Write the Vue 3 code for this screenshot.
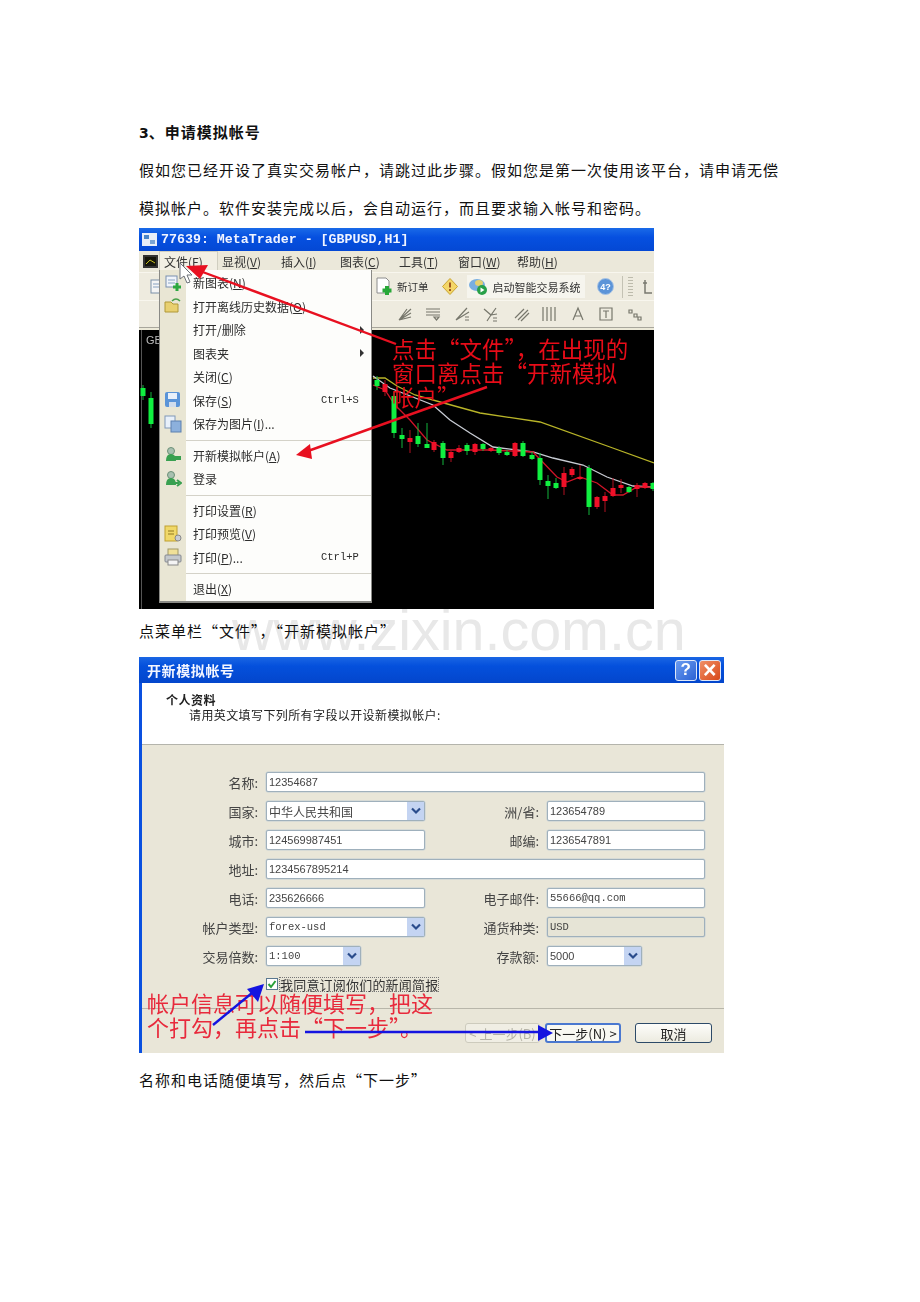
<template>
  <div class="page">
    <h3 class="heading"><span class="num">3</span>、申请模拟帐号</h3>
    <p class="para">假如您已经开设了真实交易帐户，请跳过此步骤。假如您是第一次使用该平台，请申请无偿</p>
    <p class="para">模拟帐户。软件安装完成以后，会自动运行，而且要求输入帐号和密码。</p>

    <!-- first screenshot: MetaTrader with file menu open -->
    <div class="mt">
      <div class="mt-title">
        <svg class="mt-logo" width="15" height="15" viewBox="0 0 15 15">
          <rect x="0" y="1" width="15" height="13" fill="#e8eef8" />
          <rect x="2" y="3" width="5" height="4" fill="#4a86c8" />
          <rect x="8" y="8" width="5" height="4" fill="#7aa4d4" />
        </svg>
        <span>77639: MetaTrader - [GBPUSD,H1]</span>
      </div>
      <div class="mt-menubar">
        <svg class="mt-doc" width="15" height="13" viewBox="0 0 15 13">
          <rect width="15" height="13" fill="#333" />
          <rect x="2" y="2" width="11" height="9" fill="#14140a" />
          <path d="M3 9 L7 5 L12 8" stroke="#c8c020" fill="none" />
        </svg>
        <span
          v-for="m in menubar"
          :key="m.t"
          class="mt-menu-name"
          :class="{ open: m.open }"
        >{{ m.t }}(<u>{{ m.k }}</u>)</span>
      </div>
      <div class="mt-tools first">
        <svg class="t-left" width="16" height="16" viewBox="0 0 16 16">
          <rect x="1" y="1" width="12" height="13" fill="#f4f4f4" stroke="#7a90a8" />
          <path d="M3 5h8M3 8h8" stroke="#86a0c0" />
        </svg>
        <svg class="t-order" width="17" height="19" viewBox="0 0 17 19">
          <path d="M1 1h9l3 3v12H1z" fill="#fff" stroke="#8c8c8c" />
          <path d="M11 9v9M6.500 13.500h9" stroke="#28a838" stroke-width="4" />
        </svg>
        <span class="t-text">新订单</span>
        <svg class="t-diamond" width="16" height="17" viewBox="0 0 16 17">
          <path d="M8 0.500 L15.500 8.500 L8 16.500 L0.500 8.500Z" fill="#f4d668" stroke="#c8a430" />
          <rect x="7" y="4.500" width="2" height="5" fill="#a05820" />
          <rect x="7" y="11" width="2" height="2" fill="#a05820" />
        </svg>
        <span class="t-expert">
          <svg width="19" height="18" viewBox="0 0 19 18">
            <ellipse cx="8" cy="7" rx="8" ry="6" fill="#78aee0" />
            <ellipse cx="10" cy="5" rx="4" ry="3" fill="#e4d070" />
            <circle cx="13" cy="12" r="5" fill="#28a048" />
            <path d="M11.500 9.500 L15.500 12 L11.500 14.500Z" fill="#fff" />
          </svg>
          <span>启动智能交易系统</span>
        </span>
        <svg class="t-help" width="17" height="17" viewBox="0 0 17 17">
          <circle cx="8.500" cy="8.500" r="8" fill="#5c94d8" stroke="#a8c4e4" />
          <text x="8.500" y="12" text-anchor="middle" font-size="9" font-weight="700" fill="#fff" font-family="Liberation Sans">4?</text>
        </svg>
        <span class="t-sep t-sep-a"></span>
        <span class="t-grip"></span>
        <svg class="t-one" width="12" height="16" viewBox="0 0 12 16">
          <path d="M4 1v13h7M2 4h4" stroke="#7a7a70" stroke-width="1.500" fill="none" />
        </svg>
      </div>
      <div class="mt-tools second">
        <svg v-for="(t, i) in drawTools" :key="i" class="t-draw" :style="{ marginLeft: t.gap + 'px' }" width="16" height="16" viewBox="0 0 16 16">
          <path :d="t.d" stroke="#77776c" stroke-width="1.200" fill="none" />
        </svg>
      </div>

      <div class="mt-chart">
        <svg width="515" height="279" viewBox="139 330 515 279">
          <rect x="141" y="330" width="1" height="279" fill="#555" />
          <text x="146" y="344" font-size="11" fill="#bbb" font-family="Liberation Sans">GB</text>
          <polyline :points="yellowLine" fill="none" stroke="#b8b428" stroke-width="1.300" />
          <polyline :points="whiteLine" fill="none" stroke="#c8ccd4" stroke-width="1.300" />
          <polyline :points="redLine" fill="none" stroke="#d01428" stroke-width="1.300" />
          <g v-for="(c, i) in candles" :key="i">
            <line :x1="c[0]" :x2="c[0]" :y1="c[3]" :y2="c[4]" :stroke="c[5] ? '#12b43c' : '#b01020'" stroke-width="1" />
            <rect :x="c[0] - 2.500" :y="c[1]" width="5" :height="c[2] - c[1]" :fill="c[5] ? '#10f040' : '#f01028'" />
          </g>
        </svg>
      </div>

      <div class="mt-file">
        <template v-for="(g, gi) in menuGroups" :key="gi">
          <div v-if="gi" class="file-sep"></div>
          <div v-for="it in g" :key="it.t" class="file-item">
            <span class="file-icon">
              <svg v-if="it.icon" width="18" height="18" viewBox="0 0 18 18" v-html="icons[it.icon]"></svg>
            </span>
            <span class="file-label">{{ it.t }}<template v-if="it.k">(<u>{{ it.k }}</u>)</template>{{ it.dots }}</span>
            <span v-if="it.sc" class="file-sc">{{ it.sc }}</span>
            <span v-if="it.sub" class="file-sub"></span>
          </div>
        </template>
      </div>

      <svg class="overlay" width="515" height="381" viewBox="139 228 515 381">
        <g class="note-red">
          <text x="392" y="358">点击“文件”，在出现的</text>
          <text x="392" y="382">窗口离点击“开新模拟</text>
          <text x="392" y="406">帐户”</text>
        </g>
        <line x1="396" y1="344" x2="200" y2="271" stroke="#e81020" stroke-width="2.400" />
        <path d="M186 266 L208 265 L200 279Z" fill="#e81020" />
        <line x1="487" y1="387" x2="308" y2="451" stroke="#e81020" stroke-width="2.400" />
        <path d="M296 455 L310 444 L312 459Z" fill="#e81020" />
        <path d="M180 263 L180 279 L184 276 L187 283 L190 282 L187 275 L192 275Z" fill="#fff" stroke="#6c7078" />
      </svg>
    </div>

    <div class="caption-row">
      <span class="watermark">www.zixin.com.cn</span>
      <p class="caption">点菜单栏“文件”，“开新模拟帐户”</p>
    </div>

    <!-- second screenshot: new demo account dialog -->
    <div class="dlg">
      <div class="dlg-title">
        <span>开新模拟帐号</span>
        <div class="dlg-btns">
          <span class="cap help">?</span>
          <span class="cap close">×</span>
        </div>
      </div>
      <div class="dlg-inner">
        <div class="dlg-head">
          <div class="head-main">个人资料</div>
          <div class="head-sub">请用英文填写下列所有字段以开设新模拟帐户:</div>
        </div>
        <div class="dlg-body">
          <div class="form">
            <template v-for="f in fields" :key="f.label">
              <label class="f-label">{{ f.label }}:</label>
              <div
                class="f-box"
                :class="[f.cls, { sel: f.sel, off: f.off }]"
              >
                <span :class="f.font">{{ f.val }}</span>
                <span v-if="f.sel" class="f-arrow">
                  <svg width="12" height="8" viewBox="0 0 12 8"><path d="M2 1.500 L6 5.500 L10 1.500" stroke="#2a4c8c" stroke-width="2.200" fill="none" /></svg>
                </span>
              </div>
            </template>
          </div>
          <div class="agree">
            <span class="check">
              <svg width="10" height="10" viewBox="0 0 10 10"><path d="M1.500 5 L4 8 L8.500 2" stroke="#28a038" stroke-width="2" fill="none" /></svg>
            </span>
            <span class="agree-text">我同意订阅你们的新闻简报</span>
          </div>
          <div class="dlg-sep"></div>
          <div class="dlg-foot">
            <span class="btn disabled">&lt; 上一步(B)</span>
            <span class="btn primary">下一步(N) &gt;</span>
            <span class="btn cancel">取消</span>
          </div>
        </div>
      </div>
      <svg class="overlay" width="585" height="396" viewBox="139 657 585 396">
        <g class="note-pink">
          <text x="147" y="1012">帐户信息可以随便填写，把这</text>
          <text x="147" y="1036">个打勾，再点击“下一步”。</text>
        </g>
        <line x1="213" y1="1025" x2="252" y2="993" stroke="#1414e0" stroke-width="2.400" />
        <path d="M264 984 L258 1002 L247 989Z" fill="#1414e0" />
        <line x1="305" y1="1032" x2="542" y2="1032" stroke="#1414e0" stroke-width="2.400" />
        <path d="M553 1033 L538 1025 L538 1041Z" fill="#1414e0" />
      </svg>
    </div>

    <p class="caption last">名称和电话随便填写，然后点“下一步”</p>
  </div>
</template>

<script setup>
const menubar = [
  { t: '文件', k: 'F', open: true },
  { t: '显视', k: 'V' },
  { t: '插入', k: 'I' },
  { t: '图表', k: 'C' },
  { t: '工具', k: 'T' },
  { t: '窗口', k: 'W' },
  { t: '帮助', k: 'H' }
]

const drawTools = [
  { gap: 0, d: 'M2 14 L14 3 M2 14 L14 7 M2 14 L14 11 M2 14 L10 3' },
  { gap: 12, d: 'M1 3h14M1 6h14M1 9h14M9 11h5l-2.500 3z' },
  { gap: 13, d: 'M2 14 L13 2 M2 14 L15 6 M11 11h4M11 14h4' },
  { gap: 12, d: 'M2 3 L9 9 L14 2 M9 9 L5 15 M9 9 L15 8 M11 12h4M11 15h4' },
  { gap: 16, d: 'M1 12 L10 3 M4 14 L14 4 M7 15 L15 7' },
  { gap: 11, d: 'M2 1v14M6 1v14M10 1v14M14 1v14' },
  { gap: 13, d: 'M3 14 L8 2 L13 14 M5 10h6' },
  { gap: 12, d: 'M2 2h12v12H2z M5 5h6M8 5v7' },
  { gap: 13, d: 'M2 4h3v3H2z M7 8h3v3H7z M11 11h3v3h-3z' }
]

const yellowLine = '373,378 385,378 397,386 415,395 433,400 480,413 540,422 610,447 654,463'
const whiteLine = '373,376 390,388 433,405 450,420 470,433 493,447 533,452 553,458 583,465 607,477 633,486 654,487'
const redLine = '373,385 385,390 395,405 410,420 427,440 447,450 490,450 533,452 557,477 567,482 580,477 597,483 613,495 623,495 637,487 654,487'

// x, body top, body bottom, wick top, wick bottom, green
const candles = [
  [151, 398, 424, 392, 428, 1], [143, 388, 396, 385, 400, 1],
  [377, 380, 386, 376, 390, 1], [385, 384, 392, 380, 396, 0],
  [394, 396, 433, 392, 438, 1], [402, 435, 439, 428, 448, 1], [410, 438, 442, 430, 453, 0],
  [418, 436, 444, 423, 447, 1], [427, 444, 448, 423, 448, 1], [434, 442, 450, 440, 452, 0],
  [443, 443, 458, 441, 465, 1], [451, 452, 458, 450, 462, 0], [459, 448, 452, 445, 453, 0],
  [467, 445, 451, 443, 455, 1], [475, 444, 452, 443, 455, 0], [483, 444, 449, 443, 451, 1],
  [491, 448, 451, 447, 452, 0], [499, 448, 453, 446, 455, 1], [507, 452, 455, 450, 456, 1],
  [515, 443, 456, 442, 457, 0], [523, 443, 456, 441, 457, 1], [532, 455, 459, 452, 460, 1],
  [540, 458, 480, 453, 485, 1], [548, 481, 486, 475, 499, 1], [556, 483, 488, 478, 489, 1],
  [564, 473, 487, 467, 495, 0], [572, 469, 475, 467, 477, 0], [580, 477, 479, 465, 480, 0],
  [589, 468, 507, 465, 515, 1], [597, 497, 507, 496, 509, 0], [605, 496, 501, 492, 512, 0],
  [613, 488, 496, 478, 497, 0], [621, 485, 488, 479, 493, 0], [629, 487, 492, 486, 493, 1],
  [637, 485, 489, 483, 497, 0], [645, 483, 488, 482, 489, 0], [653, 483, 489, 482, 491, 1]
]

const menuGroups = [
  [
    { t: '新图表', k: 'N', icon: 'chart' },
    { t: '打开离线历史数据', k: 'O', icon: 'folder' },
    { t: '打开/删除', sub: true },
    { t: '图表夹', sub: true },
    { t: '关闭', k: 'C' },
    { t: '保存', k: 'S', sc: 'Ctrl+S', icon: 'disk' },
    { t: '保存为图片', k: 'I', dots: '...', icon: 'pic' }
  ],
  [
    { t: '开新模拟帐户', k: 'A', icon: 'user' },
    { t: '登录', icon: 'login' }
  ],
  [
    { t: '打印设置', k: 'R' },
    { t: '打印预览', k: 'V', icon: 'preview' },
    { t: '打印', k: 'P', dots: '...', sc: 'Ctrl+P', icon: 'printer' }
  ],
  [{ t: '退出', k: 'X' }]
]

const person = '<circle cx="7" cy="5" r="3.500" fill="#a8c0b0" stroke="#6c9078"/><path d="M2 15 Q2 8 7 8 Q12 8 12 15Z" fill="#38a050"/>'
const icons = {
  chart: '<rect x="2" y="2" width="11" height="11" fill="#f0f4fa" stroke="#7a90b0"/><path d="M4 6h7M4 9h7" stroke="#8aa4c4"/><path d="M13 9v8M9 13h8" stroke="#2ca840" stroke-width="3"/>',
  folder: '<path d="M1 15V5h6l2 2h5v8z" fill="#e8d070" stroke="#b09838"/><path d="M8 4 Q12 0 16 4" stroke="#48a048" stroke-width="1.500" fill="none"/>',
  disk: '<rect x="1" y="1" width="15" height="15" rx="2" fill="#5a94d8"/><rect x="4" y="2" width="9" height="6" fill="#e8f0fa"/><rect x="5" y="11" width="7" height="5" fill="#d0dcec"/>',
  pic: '<rect x="1" y="1" width="10" height="12" fill="#e8f0fa" stroke="#8098b8"/><rect x="7" y="6" width="10" height="11" fill="#8cb0dc" stroke="#5c80b0"/>',
  user: person + '<path d="M11 12h6" stroke="#38a050" stroke-width="4"/>',
  login: person + '<path d="M10 13h5M13 10l4 3-4 3" stroke="#38a050" stroke-width="2" fill="none"/>',
  preview: '<rect x="1" y="1" width="12" height="15" fill="#f0d868" stroke="#c0a030"/><path d="M4 6h6M4 9h6" stroke="#907820"/><circle cx="14" cy="13" r="3" fill="#c8ccd4" stroke="#888"/>',
  printer: '<rect x="4" y="1" width="10" height="7" fill="#f0e098" stroke="#a09868"/><rect x="1" y="7" width="16" height="7" rx="1" fill="#c4c8cc" stroke="#848890"/><rect x="4" y="12" width="10" height="5" fill="#f4f4f4" stroke="#888"/>'
}

const fields = [
  { label: '名称', val: '12354687', cls: 'wide' },
  { label: '国家', val: '中华人民共和国', sel: true, font: 'cjk-val' },
  { label: '洲/省', val: '123654789' },
  { label: '城市', val: '124569987451' },
  { label: '邮编', val: '1236547891' },
  { label: '地址', val: '1234567895214', cls: 'wide' },
  { label: '电话', val: '235626666' },
  { label: '电子邮件', val: '55666@qq.com', font: 'mono-val' },
  { label: '帐户类型', val: 'forex-usd', sel: true, font: 'mono-val' },
  { label: '通货种类', val: 'USD', off: true, font: 'mono-val' },
  { label: '交易倍数', val: '1:100', sel: true, cls: 'short', font: 'mono-val' },
  { label: '存款额', val: '5000', sel: true, cls: 'short' }
]
</script>

<style scoped>
.page {
  box-sizing: border-box;
  min-height: 1302px;
  padding: 122px 0 0 139px;
  font-family: "Noto Sans CJK SC", sans-serif;
  color: #111;
}

.heading {
  margin: 0;
  height: 19px;
  font-size: 15px;
  line-height: 19px;
  font-weight: 700;
  letter-spacing: 1px;
}

.num {
  font-family: "DejaVu Sans", sans-serif;
  font-size: 14px;
  letter-spacing: 0;
}

.para {
  margin: 0;
  height: 38px;
  font-size: 15px;
  line-height: 38px;
  letter-spacing: 1px;
  white-space: nowrap;
}

.heading + .para {
  margin-top: 10px;
}

.para + .mt {
  margin-top: 1px;
}

/* MetaTrader window */
.mt {
  position: relative;
  width: 515px;
  height: 381px;
  display: flex;
  flex-direction: column;
  overflow: hidden;
  background: #ece9d8;
  filter: blur(0.45px);
  z-index: 1;
}

.mt-title {
  height: 23px;
  flex: none;
  display: flex;
  align-items: center;
  gap: 4px;
  padding-left: 3px;
  background: linear-gradient(#1a6ae8, #0650e0 40%, #0448d4);
  color: #f0f4ff;
  font-family: "Liberation Mono", monospace;
  font-weight: 700;
  font-size: 13.300px;
  white-space: nowrap;
}

.mt-logo {
  flex: none;
}

.mt-menubar {
  height: 21px;
  flex: none;
  display: flex;
  align-items: center;
  padding-left: 4px;
  background: #ebe8da;
  font-size: 12px;
  color: #333;
}

.mt-doc {
  margin-right: 1px;
  flex: none;
}

.mt-menu-name {
  width: 59px;
  box-sizing: border-box;
  padding-left: 4px;
  white-space: nowrap;
}

.mt-menu-name.open {
  padding-left: 5px;
  height: 21px;
  line-height: 21px;
  background: #f2efe4;
  box-shadow: inset 1px 0 #d0cec0, inset -1px 0 #d0cec0, inset 0 1px #d0cec0;
}

.mt-tools {
  height: 28px;
  flex: none;
  display: flex;
  align-items: center;
  background: #eeebdf;
  border-top: 1px solid #f8f6ee;
  box-sizing: border-box;
}

.t-left {
  margin-left: 11px;
  flex: none;
}

.t-order {
  margin-left: 210px;
  flex: none;
}

.t-text {
  margin-left: 4px;
  font-size: 10.500px;
  color: #333;
  white-space: nowrap;
}

.t-diamond {
  margin-left: 13px;
  flex: none;
}

.t-expert {
  margin-left: 9px;
  width: 118px;
  height: 23px;
  flex: none;
  display: flex;
  align-items: center;
  gap: 5px;
  padding-left: 2px;
  box-sizing: border-box;
  background: #f6f5ee;
  font-size: 11px;
  color: #333;
  white-space: nowrap;
}

.t-help {
  margin-left: 12px;
  flex: none;
}

.t-sep-a {
  width: 1px;
  height: 22px;
  margin-left: 8px;
  background: #c4c2b4;
}

.t-grip {
  width: 5px;
  height: 20px;
  margin-left: 5px;
  background: repeating-linear-gradient(#bdbbac 0 1px, transparent 1px 3px);
}

.t-one {
  margin-left: 8px;
  flex: none;
}

.mt-tools.second {
  padding-left: 258px;
  border-bottom: 1px solid #a8a69c;
}

.t-draw {
  flex: none;
}

.mt-chart {
  flex: 1;
  margin-top: 2px;
  background: #000;
  min-height: 0;
}

.mt-chart svg {
  display: block;
}

.mt-file {
  position: absolute;
  left: 20px;
  top: 42px;
  width: 213px;
  height: 333px;
  box-sizing: border-box;
  padding-top: 1px;
  background: linear-gradient(90deg, #e9e6d4 26px, #fdfdfb 26px);
  border: 1px solid #8a8a86;
  border-width: 0 1px 2px 1px;
  font-size: 12px;
  color: #2c2c2c;
}

.file-item {
  position: relative;
  height: 23.500px;
  display: flex;
  align-items: center;
  white-space: nowrap;
}

.file-icon {
  width: 26px;
  height: 18px;
  margin-right: 7px;
  display: flex;
  justify-content: center;
  flex: none;
}

.file-sc {
  position: absolute;
  left: 161px;
  font-family: "Liberation Mono", monospace;
  font-size: 10.500px;
}

.file-sub {
  position: absolute;
  left: 200px;
  border-left: 4px solid #333;
  border-top: 4px solid transparent;
  border-bottom: 4px solid transparent;
}

.file-sep {
  height: 8px;
  margin-left: 26px;
  position: relative;
}

.file-sep::after {
  content: "";
  position: absolute;
  left: 0;
  right: 0;
  top: 4px;
  height: 1px;
  background: #d4d2c8;
}

.overlay {
  position: absolute;
  left: 0;
  top: 0;
  pointer-events: none;
}

.note-red text {
  font-size: 22.500px;
  fill: #e80c18;
}

.note-pink text {
  font-size: 22px;
  fill: #e82a3c;
}

/* caption with watermark behind */
.caption-row {
  position: relative;
  height: 48px;
  display: flex;
  align-items: center;
  padding-bottom: 6px;
  box-sizing: border-box;
}

.watermark {
  position: absolute;
  left: 93px;
  top: -12px;
  font-family: "Liberation Sans", sans-serif;
  font-size: 57.500px;
  line-height: 66px;
  color: #e8e8e8;
  white-space: nowrap;
}

.caption {
  position: relative;
  margin: 0;
  font-size: 15px;
  letter-spacing: 1px;
  white-space: nowrap;
}

.caption.last {
  height: 54px;
  line-height: 54px;
}

/* Dialog */
.dlg {
  position: relative;
  width: 585px;
  height: 396px;
  display: flex;
  flex-direction: column;
  overflow: hidden;
  filter: blur(0.45px);
}

.dlg-title {
  height: 26px;
  flex: none;
  display: flex;
  align-items: center;
  justify-content: space-between;
  padding: 0 3px 0 8px;
  background: linear-gradient(#1a66e4, #0450dc 35%, #0346cc);
  color: #f4f6ff;
  font-size: 14px;
  font-weight: 700;
  letter-spacing: 0.600px;
}

.dlg-btns {
  display: flex;
  gap: 2px;
}

.cap {
  width: 22px;
  height: 21px;
  display: flex;
  align-items: center;
  justify-content: center;
  border: 1px solid #dfe8f8;
  border-radius: 3px;
  box-sizing: border-box;
  color: #fff;
  font-family: "Liberation Sans", sans-serif;
  font-size: 17px;
  font-weight: 700;
}

.cap.help {
  background: linear-gradient(135deg, #6a9cf0, #2c62d4);
}

.cap.close {
  background: linear-gradient(135deg, #f09068, #d84818);
  font-size: 23px;
}

.dlg-inner {
  flex: 1;
  display: flex;
  flex-direction: column;
  border-left: 3px solid #0a50e0;
  min-height: 0;
}

.dlg-head {
  height: 62px;
  flex: none;
  box-sizing: border-box;
  padding: 9px 0 0 24px;
  background: #fff;
  border-bottom: 1px solid #b4b4ac;
  font-size: 12px;
  line-height: 15px;
  color: #222;
}

.head-main {
  font-weight: 700;
  letter-spacing: 0.500px;
}

.head-sub {
  padding-left: 23px;
  letter-spacing: 0.400px;
  white-space: nowrap;
}

.dlg-body {
  flex: 1;
  background: #e9e6d8;
  padding-top: 27px;
}

.form {
  display: grid;
  grid-template-columns: 116px 159px 106px 158px;
  grid-auto-rows: 20px;
  column-gap: 8px;
  row-gap: 9px;
}

.f-label {
  display: flex;
  align-items: center;
  justify-content: flex-end;
  font-size: 13px;
  color: #444;
  white-space: nowrap;
}

.f-box {
  position: relative;
  display: flex;
  align-items: center;
  box-sizing: border-box;
  padding-left: 2px;
  background: #fff;
  border: 1px solid #9fb0bc;
  border-radius: 2px;
  box-shadow: 0 0 0 0.500px #c4ced4;
  font-family: "Liberation Sans", sans-serif;
  font-size: 11px;
  color: #444;
  white-space: nowrap;
}

.f-box.wide {
  grid-column: 2 / 5;
}

.f-box.short {
  width: 95px;
}

.f-box.off {
  background: #e6e4d6;
}

.f-box.short + .f-label {
  justify-self: end;
}

.mono-val {
  font-family: "Liberation Mono", monospace;
  font-size: 10.500px;
}

.cjk-val {
  font-family: "Noto Sans CJK SC", sans-serif;
  font-size: 12px;
}

.f-arrow {
  position: absolute;
  right: 0;
  top: 0;
  bottom: 0;
  width: 17px;
  display: flex;
  align-items: center;
  justify-content: center;
  background: #c4d4f2;
}

.agree {
  height: 14px;
  margin: 11px 0 0 124px;
  display: flex;
  align-items: center;
  gap: 2px;
}

.check {
  width: 12px;
  height: 12px;
  box-sizing: border-box;
  border: 1px solid #5a7890;
  background: #fff;
  display: flex;
  align-items: center;
  justify-content: center;
}

.agree-text {
  font-size: 13px;
  letter-spacing: 0.200px;
  color: #333;
  outline: 1px dotted #777;
  line-height: 13px;
  white-space: nowrap;
}

.dlg-sep {
  height: 1px;
  margin: 17px 0 0;
  background: #b8b6aa;
}

.dlg-foot {
  display: flex;
  justify-content: flex-end;
  margin-top: 14px;
  padding-right: 12px;
}

.btn {
  height: 20px;
  display: flex;
  align-items: center;
  justify-content: center;
  box-sizing: border-box;
  border-radius: 3px;
  font-size: 13px;
  white-space: nowrap;
}

.btn.disabled {
  width: 75px;
  border: 1px solid #cdcbbd;
  color: #b4b2a6;
  background: #f0eee4;
}

.btn.primary {
  width: 76px;
  margin-left: 5px;
  border: 2px solid #4a78d0;
  color: #222;
  background: #f8f8f2;
}

.btn.cancel {
  width: 77px;
  margin-left: 14px;
  border: 1px solid #2c4a68;
  color: #222;
  background: linear-gradient(#fdfdfa, #ecebe0);
}
</style>
